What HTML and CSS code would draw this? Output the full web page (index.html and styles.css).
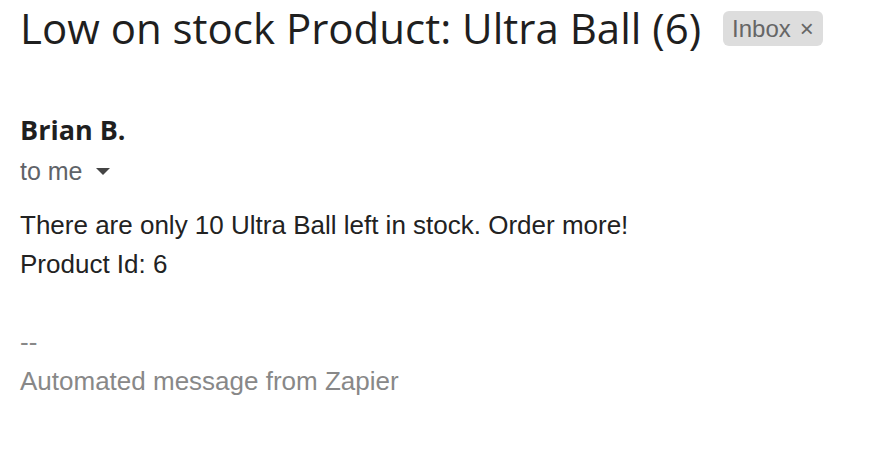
FILE: index.html
```html
<!DOCTYPE html>
<html>
<head>
<meta charset="utf-8">
<link rel="stylesheet" href="styles.css">
</head>
<body>
<div class="mail">
  <div class="subject-row">
    <h1 class="subject">Low on stock Product: Ultra Ball (6)</h1>
    <span class="label">Inbox<span class="label-x">×</span></span>
  </div>
  <div class="sender">Brian B.</div>
  <div class="recipient">to me <span class="caret"></span></div>
  <div class="body">
    <div>There are only 10 Ultra Ball left in stock. Order more!</div>
    <div>Product Id: 6</div>
    <div class="sig">
      <div>--</div>
      <div>Automated message from Zapier</div>
    </div>
  </div>
</div>
</body>
</html>
```
FILE: styles.css
```css
html, body {
  margin: 0;
  padding: 0;
  background: #ffffff;
}
.mail {
  padding: 0 20px;
}
.subject-row {
  display: flex;
  align-items: center;
  padding-top: 1px;
}
.subject {
  margin: 0;
  flex-shrink: 0;
  font-family: "Open Sans", Roboto, sans-serif;
  font-weight: 400;
  font-size: 42px;
  line-height: 54px;
  color: #1f1f1f;
  white-space: nowrap;
}
.label {
  margin-left: 22px;
  background: #dddddd;
  color: #666666;
  font-family: "Liberation Sans", Arial, sans-serif;
  font-size: 24px;
  line-height: 28px;
  border-radius: 6px;
  padding: 4px 9px 3px 9px;
  display: inline-flex;
  align-items: center;
}
.label-x {
  margin-left: 9px;
  font-size: 24px;
}
.sender {
  margin-top: 59px;
  font-family: "Open Sans", Roboto, sans-serif;
  font-weight: 700;
  font-size: 27px;
  line-height: 32px;
  color: #1f1f1f;
}
.recipient {
  font-family: "Liberation Sans", Arial, sans-serif;
  font-size: 25px;
  line-height: 30px;
  color: #5f6368;
  margin-top: 10px;
  display: flex;
  align-items: center;
}
.caret {
  display: inline-block;
  width: 0;
  height: 0;
  border-left: 7px solid transparent;
  border-right: 7px solid transparent;
  border-top: 7px solid #444;
  margin-left: 13px;
}
.body {
  margin-top: 20px;
  font-family: "Liberation Sans", Arial, sans-serif;
  font-size: 26px;
  line-height: 39px;
  color: #222222;
}
.sig {
  margin-top: 39px;
  color: #888888;
}
```
